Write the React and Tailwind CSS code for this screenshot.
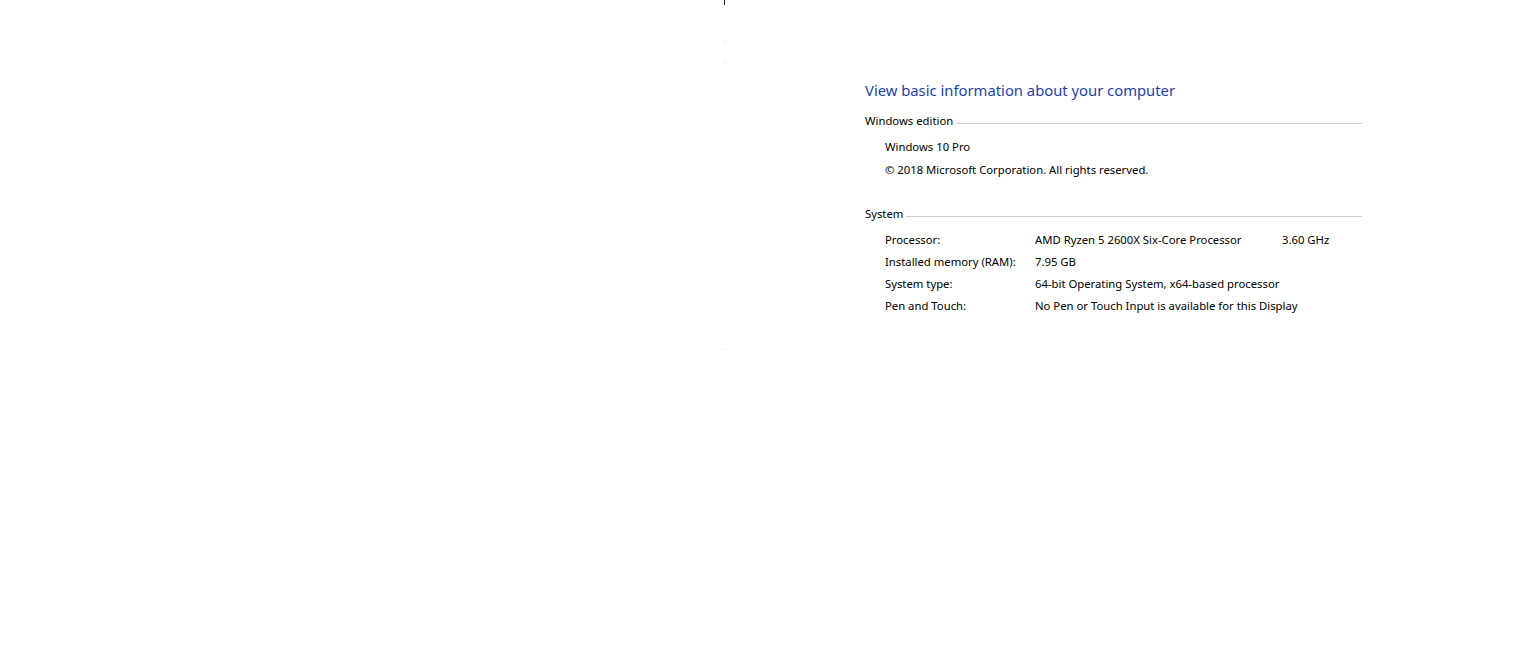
import React from "react";

const font = { fontFamily: '"Segoe UI", "Noto Sans", "Open Sans", sans-serif' };

function Section({ title, children, className = "" }) {
  return (
    <div className={className}>
      <div className="flex items-center h-[16px]">
        <span className="text-[11.3px] leading-[16px] text-black pr-[3px]">{title}</span>
        <div className="flex-1 h-px bg-[#cfcfcf] mt-[5px]" />
      </div>
      <div className="pl-[20px]">{children}</div>
    </div>
  );
}

function Row({ label, value, extra }) {
  return (
    <div className="flex h-[22px] items-center text-[11.3px] text-black">
      <div className="w-[150px] shrink-0 whitespace-nowrap">{label}</div>
      <div className="w-[247px] shrink-0 whitespace-nowrap">{value}</div>
      {extra && <div className="whitespace-nowrap">{extra}</div>}
    </div>
  );
}

export default function App() {
  return (
    <div className="w-[1536px] h-[648px] bg-white flex overflow-hidden" style={font}>
      <div className="w-[724px] shrink-0" />
      <div className="w-[2px] shrink-0 flex flex-col">
        <div className="w-px h-[5px] bg-[#1a2a1a]" />
        <div className="w-[2px] h-px bg-[#e4e4e4] mt-[36px]" />
        <div className="w-[2px] h-px bg-[#e4e4e4] mt-[20px]" />
        <div className="w-[2px] h-px bg-[#e4e4e4] mt-[286px]" />
      </div>
      <div className="w-[139px] shrink-0" />
      <div className="w-[497px] shrink-0 pt-[80px]">
        <h1 className="text-[14.8px] leading-[20px] text-[#1e3fae] font-normal whitespace-nowrap">
          View basic information about your computer
        </h1>
        <Section title="Windows edition" className="mt-[13px]">
          <div className="mt-[7px] h-[23px] flex items-center text-[11.3px] text-black">Windows 10 Pro</div>
          <div className="h-[23px] flex items-center text-[11.3px] text-black whitespace-nowrap">
            © 2018 Microsoft Corporation. All rights reserved.
          </div>
        </Section>
        <Section title="System" className="mt-[24px]">
          <div className="mt-[7px]">
            <Row label="Processor:" value="AMD Ryzen 5 2600X Six-Core Processor" extra="3.60 GHz" />
            <Row label="Installed memory (RAM):" value="7.95 GB" />
            <Row label="System type:" value="64-bit Operating System, x64-based processor" />
            <Row label="Pen and Touch:" value="No Pen or Touch Input is available for this Display" />
          </div>
        </Section>
      </div>
    </div>
  );
}
